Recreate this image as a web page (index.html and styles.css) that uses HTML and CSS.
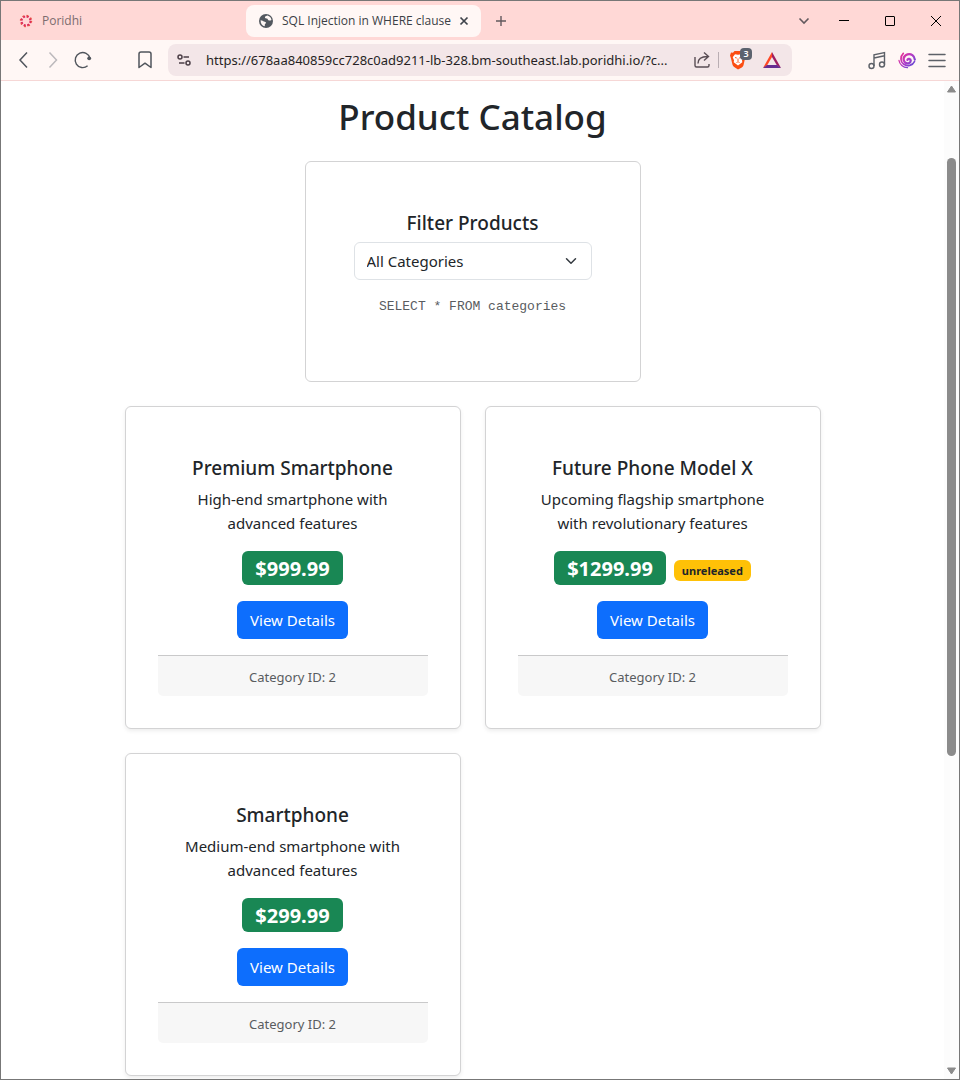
FILE: index.html
```html
<!DOCTYPE html>
<html lang="en">
<head>
<meta charset="utf-8">
<meta name="viewport" content="width=device-width, initial-scale=1">
<title>SQL Injection in WHERE clause</title>
<link rel="stylesheet" href="styles.css">
</head>
<body>
<div class="window">
  <header class="tabstrip">
    <div class="tab">
      <svg class="favicon" viewBox="0 0 14 14" width="14" height="14" fill="none"><circle cx="7" cy="7" r="4.600" stroke="#dc2a5c" stroke-width="2.200" stroke-dasharray="2.200 1.410"/><circle cx="7" cy="7" r="5.600" stroke="#e8543f" stroke-width="1.200" stroke-dasharray="1.600 2.800"/></svg>
      <span class="tab-title">Poridhi</span>
    </div>
    <div class="tab tab-active">
      <svg class="favicon" viewBox="0 0 14 14" width="14" height="14"><circle cx="7" cy="7" r="7" fill="#53585f"/><path d="M1.600 6.200c1.600.2 2.600.8 3.400 1.300.9.5 2 .2 2 1.200 0 .9-1.200.8-1.200 2v1.600C3.400 11.900 1.500 9.800 1.600 6.200zM8.600 1.600c-1.200.5-2.700.6-2.700 1.800 0 1 1.300.8 2.200 1.200.8.4.7 1.600 1.700 1.900.9.3 1.800-.2 2.700-.5-.4-2.200-1.900-3.800-3.900-4.400z" fill="#fff7f5"/></svg>
      <span class="tab-title">SQL Injection in WHERE clause</span>
      <button class="tab-close" aria-label="Close tab"><svg viewBox="0 0 10 10" width="10" height="10" fill="none" stroke="#3f444b" stroke-width="1.700"><path d="M1.500 1.500l7 7M8.500 1.500l-7 7"/></svg></button>
    </div>
    <button class="icon-btn" aria-label="New tab"><svg viewBox="0 0 12 12" width="12" height="12" fill="none" stroke="#62595e" stroke-width="1.400"><path d="M6 1v10M1 6h10"/></svg></button>
    <div class="window-controls">
      <button class="icon-btn tab-search" aria-label="Search tabs"><svg viewBox="0 0 12 12" width="12" height="12" fill="none" stroke="#62595e" stroke-width="1.600"><path d="M1.500 3.500L6 8l4.500-4.500"/></svg></button>
      <button class="win-btn" aria-label="Minimize"><svg viewBox="0 0 10 10" width="10" height="10" fill="none" stroke="#000"><path d="M0 4.500h10"/></svg></button>
      <button class="win-btn" aria-label="Maximize"><svg viewBox="0 0 10 10" width="10" height="10" fill="none" stroke="#000"><rect x=".5" y=".5" width="9" height="9" rx=".5"/></svg></button>
      <button class="win-btn" aria-label="Close"><svg viewBox="0 0 10 10" width="10" height="10" fill="none" stroke="#000"><path d="M0 0l10 10M10 0L0 10"/></svg></button>
    </div>
  </header>

  <nav class="toolbar" aria-label="Browser toolbar">
    <div class="nav-group">
      <button class="icon-btn" aria-label="Back"><svg viewBox="0 0 20 20" width="20" height="20" fill="none" stroke="#50555c" stroke-width="1.500"><path d="M14 2.500L7 10l7 7.500"/></svg></button>
      <button class="icon-btn" aria-label="Forward"><svg viewBox="0 0 20 20" width="20" height="20" fill="none" stroke="#bcb9bc" stroke-width="1.500"><path d="M6.500 2.500l7 7.500-7 7.500"/></svg></button>
      <button class="icon-btn" aria-label="Reload"><svg viewBox="0 0 20 20" width="20" height="20" fill="none" stroke="#50555c" stroke-width="1.400"><path d="M14.600 15.800A7.500 7.500 0 1 1 17 8.300"/><circle cx="16.200" cy="8.300" r="1.900" fill="#50555c" stroke="none"/></svg></button>
    </div>
    <button class="icon-btn" aria-label="Bookmark"><svg viewBox="0 0 20 20" width="20" height="20" fill="none" stroke="#50555c" stroke-width="1.500" stroke-linejoin="round"><path d="M4 17.500V4q0-2 2-2h8q2 0 2 2v13.500l-6-4.300z"/></svg></button>
    <div class="urlbar">
      <svg class="site-icon" viewBox="0 0 16 16" width="16" height="16" fill="none" stroke="#4c3f47" stroke-width="1.500"><circle cx="4" cy="5" r="2"/><path d="M7.500 5H13M3 11h5.500"/><circle cx="12" cy="11" r="2"/></svg>
      <input class="url" type="text" aria-label="Address" value="https://678aa840859cc728c0ad9211-lb-328.bm-southeast.lab.poridhi.io/?c...">
      <button class="share" aria-label="Share"><svg viewBox="0 0 18 18" width="18" height="18" fill="none" stroke="#594d54" stroke-width="1.400"><path d="M2 6v8.500q0 1.500 1.500 1.500h11q1.500 0 1.500-1.500V13M5 12.500c0-4.500 3-7 9.500-7M11 1.500l4.500 4-4.500 4"/></svg></button>
      <span class="divider"></span>
      <button class="shield" aria-label="Brave Shields, 3 blocked">
        <svg viewBox="0 0 18 20" width="18" height="20"><path d="M5.500 1h7l1.500 1.700 2-.2 1 3-1 3-1.500 6.700q-.4 1.500-1.700 2.300L9 19.500l-3.800-2.500q-1.300-.8-1.700-2.300L2 8.500l-1-3 1-3 2 .2z" fill="#fb4d12"/><path d="M6 4.200l3 .5 3-.5 2.300 3-1.300 3 .3 2-4.300 3.300-4.300-3.300.3-2-1.300-3z" fill="#fff"/><path d="M6 7.500l1.800.5M12 7.500l-1.800.5M7.500 12.500l1.500-.8 1.500.8M9 8.500v2.500" stroke="#fb4d12" stroke-width=".9" fill="none"/></svg>
        <span class="count">3</span>
      </button>
      <button class="rewards" aria-label="Brave Rewards"><svg viewBox="0 0 20 18" width="20" height="18"><path d="M10 1L1 17l4-2.500L10 6z" fill="#ff4724"/><path d="M10 1l9 16-4-2.500L10 6z" fill="#9e1f63"/><path d="M1 17h18l-4-3H5z" fill="#662d91"/></svg></button>
    </div>
    <div class="nav-group">
      <button class="icon-btn" aria-label="Media"><svg viewBox="0 0 20 20" width="20" height="20" fill="none" stroke="#5d6168" stroke-width="1.400"><path d="M7 16V4.700L17.500 2.500v12M7 8l10.500-2.300"/><circle cx="4.500" cy="16" r="2.500"/><circle cx="15" cy="14.500" r="2.500"/></svg></button>
      <button class="icon-btn" aria-label="Extension"><svg viewBox="0 0 18 18" width="18" height="18" fill="none" stroke="url(#swirl)" stroke-linecap="round"><defs><linearGradient id="swirl" gradientUnits="userSpaceOnUse" x1="2" y1="2" x2="16" y2="16"><stop offset="0" stop-color="#f02c8c"/><stop offset=".5" stop-color="#b33cc5"/><stop offset="1" stop-color="#554bd8"/></linearGradient></defs><path d="M9.500 8.800c.3-1.600 3.300-1.300 3.200 1-.1 2.600-3.600 3.500-5.700 1.600C4.500 9 5.500 4.500 9.500 3.300c3.600-1 7 1.500 7.300 5.200" stroke-width="2.300"/><path d="M5.300 2.300C2 5.500 2.300 10.500 5.500 13c3.800 2.900 9.300 1.500 11-2.500" stroke-width="1.700"/><path d="M1 9.500c.5 3.800 4 7 8.500 7.200" stroke-width="1.300"/></svg></button>
      <button class="icon-btn" aria-label="Menu"><svg viewBox="0 0 18 18" width="18" height="18" fill="none" stroke="#5d6168" stroke-width="1.500" stroke-linecap="round"><path d="M1 3.500h16M1 9.500h16M1 15.500h16"/></svg></button>
    </div>
  </nav>

  <div class="viewport">
    <main class="page">
      <div class="container">
        <h1>Product Catalog</h1>
        <section class="card filter-card">
          <div class="card-body">
            <label class="card-title" for="category">Filter Products</label>
            <div class="select-wrap">
              <select id="category"><option>All Categories</option></select>
              <svg class="chevron" viewBox="0 0 16 16" width="16" height="12" fill="none" stroke="#343a40" stroke-width="2" stroke-linecap="round" stroke-linejoin="round"><path d="m2 5 6 6 6-6"/></svg>
            </div>
            <code class="query">SELECT * FROM categories</code>
          </div>
        </section>
        <div class="products">
          <article class="card product">
            <div class="card-body">
              <h2 class="card-title">Premium Smartphone</h2>
              <p class="description">High-end smartphone with<br>advanced features</p>
              <div class="badges"><span class="price">$999.99</span></div>
              <a class="btn" href="#">View Details</a>
            </div>
            <footer class="card-footer">Category ID: 2</footer>
          </article>
          <article class="card product">
            <div class="card-body">
              <h2 class="card-title">Future Phone Model X</h2>
              <p class="description">Upcoming flagship smartphone<br>with revolutionary features</p>
              <div class="badges"><span class="price">$1299.99</span><span class="status">unreleased</span></div>
              <a class="btn" href="#">View Details</a>
            </div>
            <footer class="card-footer">Category ID: 2</footer>
          </article>
          <article class="card product">
            <div class="card-body">
              <h2 class="card-title">Smartphone</h2>
              <p class="description">Medium-end smartphone with<br>advanced features</p>
              <div class="badges"><span class="price">$299.99</span></div>
              <a class="btn" href="#">View Details</a>
            </div>
            <footer class="card-footer">Category ID: 2</footer>
          </article>
        </div>
      </div>
    </main>
    <div class="scrollbar" aria-hidden="true">
      <svg viewBox="0 0 9 8" width="9" height="8"><path d="M4.500 1L8.500 7h-8z" fill="#8b8b8b" stroke="#8b8b8b" stroke-linejoin="round"/></svg>
      <div class="track"><div class="thumb"></div></div>
      <svg viewBox="0 0 9 8" width="9" height="8"><path d="M4.500 7L8.500 1h-8z" fill="#8b8b8b" stroke="#8b8b8b" stroke-linejoin="round"/></svg>
    </div>
  </div>
</div>
</body>
</html>
```
FILE: styles.css
```css
* { box-sizing: border-box; }

body {
  margin: 0;
  font-family: "Noto Sans", "Open Sans", sans-serif;
  font-size: 15px;
  line-height: 24px;
  color: #212529;
  background: #fff;
}

button {
  padding: 0;
  border: 0;
  background: none;
  font: inherit;
}

svg { display: block; flex: none; }

.window {
  display: flex;
  flex-direction: column;
  height: 100vh;
  border: 1px solid #777;
  overflow: hidden;
}

/* Tab strip */
.tabstrip {
  display: flex;
  align-items: center;
  flex: none;
  height: 39px;
  padding-left: 5px;
  gap: 5px;
  background: #ffd8d6;
}

.tab {
  display: flex;
  align-items: center;
  flex: 0 1 235px;
  min-width: 0;
  height: 32px;
  padding: 0 10px 0 13px;
  gap: 9px;
  border-radius: 8px;
  font-family: "Open Sans", "Noto Sans", sans-serif;
  font-size: 12px;
  color: #7c6c6e;
}

.tab-active { background: #fff7f5; color: #3b3f45; }
.tab-title { flex: 1; min-width: 0; white-space: nowrap; }

.tab-close,
.icon-btn,
.win-btn {
  display: flex;
  align-items: center;
  justify-content: center;
  flex: none;
}

.tab-close { width: 14px; height: 20px; }
.icon-btn { width: 30px; height: 30px; }
.win-btn { width: 46px; height: 39px; }
.tab-search { margin-right: 2px; }
.window-controls { display: flex; align-items: center; margin-left: auto; }

/* Toolbar */
.toolbar {
  display: flex;
  align-items: center;
  flex: none;
  height: 41px;
  padding: 0 7px;
  border-bottom: 1px solid #f6d7d6;
  background: #fff7f5;
}

.nav-group { display: flex; }
.nav-group:first-child { margin-right: 32px; }

.urlbar {
  display: flex;
  align-items: center;
  flex: 1;
  min-width: 0;
  height: 32px;
  margin: 0 70px 0 8px;
  padding: 0 10px 0 8px;
  border-radius: 8px;
  background: #f3e6e8;
}

.url {
  flex: 1;
  min-width: 0;
  height: 24px;
  margin-left: 14px;
  padding: 0;
  border: 0;
  background: none;
  font-family: inherit;
  font-size: 13px;
  color: #261f24;
}

.share { margin-left: 4px; }
.divider { width: 1px; height: 16px; margin: 0 10px 0 7px; background: #b9aeb3; }
.shield { position: relative; margin-right: 15px; }

.count {
  position: absolute;
  top: -2px;
  right: -5px;
  width: 12px;
  height: 12px;
  border-radius: 4px;
  background: #5b626e;
  color: #fff;
  font-size: 9px;
  font-weight: 600;
  line-height: 12px;
  text-align: center;
}

/* Page */
.viewport { display: flex; flex: 1; min-height: 0; }
.page { flex: 1; overflow: hidden; }

.container {
  max-width: 720px;
  margin: 0 auto;
  padding: 12px 12px 24px;
}

h1 {
  margin: 0 0 20px;
  font-size: 35px;
  font-weight: 500;
  line-height: 48px;
  text-align: center;
}

.card {
  padding: 32px;
  border: 1px solid #d3d3d4;
  border-radius: 6px;
  background: #fff;
  text-align: center;
}

.card-body { padding: 16px; }
.filter-card { width: calc(50% - 12px); margin: 0 auto 24px; }

.products {
  display: grid;
  grid-template-columns: 1fr 1fr;
  gap: 24px;
}

.product { box-shadow: 0 2px 4px rgba(0, 0, 0, 0.075); }

.card-title {
  display: block;
  margin: 0 -16px 6px;
  font-size: 19px;
  font-weight: 500;
  line-height: 26px;
}

.select-wrap { display: grid; align-items: center; }

.select-wrap select {
  grid-area: 1 / 1;
  width: 100%;
  height: 38px;
  padding: 0 36px 0 12px;
  border: 1px solid #dee2e6;
  border-radius: 6px;
  appearance: none;
  background: #fff;
  font: inherit;
  color: inherit;
}

.chevron {
  grid-area: 1 / 1;
  justify-self: end;
  margin-right: 13px;
  pointer-events: none;
}

.query {
  display: block;
  margin: 16px 0;
  font-family: "Liberation Mono", monospace;
  font-size: 13px;
  line-height: 21px;
  color: #595c5f;
}

.description { margin: 0 -16px 16px; }

.badges {
  display: flex;
  align-items: center;
  justify-content: center;
  gap: 8px;
  margin-bottom: 16px;
}

.price {
  height: 34px;
  padding: 0 13px;
  border-radius: 6px;
  background: #198754;
  color: #fff;
  font-size: 20px;
  font-weight: 700;
  line-height: 36px;
}

.status {
  margin-top: 4px;
  padding: 0 8px;
  border-radius: 6px;
  background: #ffc107;
  font-size: 11px;
  font-weight: 700;
  line-height: 21px;
}

.btn {
  display: inline-block;
  padding: 7px 13px;
  border-radius: 6px;
  background: #0d6efd;
  color: #fff;
  text-decoration: none;
  vertical-align: top;
}

.card-footer {
  padding: 9px 16px 7px;
  border-top: 1px solid #c9c9ca;
  border-radius: 0 0 5px 5px;
  background: #f7f7f7;
  color: #595c5f;
  font-size: 13px;
}

/* Scrollbar */
.scrollbar {
  display: flex;
  flex-direction: column;
  align-items: center;
  flex: none;
  width: 15px;
  padding: 4px 0;
  background: #fcfcfc;
}

.track { flex: 1; width: 9px; }

.thumb {
  height: 61.4%;
  margin-top: 65px;
  border-radius: 5px;
  background: #8b8b8b;
}
```
